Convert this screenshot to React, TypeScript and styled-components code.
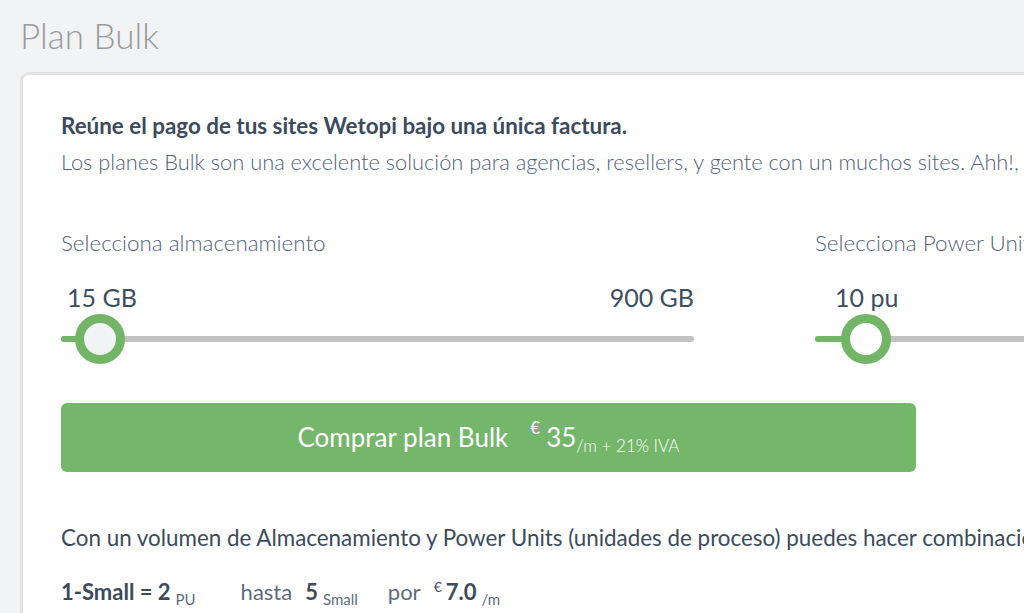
import React from "react";
import styled, { createGlobalStyle } from "styled-components";

const Global = createGlobalStyle`
  html, body { margin: 0; padding: 0; background: #f2f3f5; overflow: hidden; }
  body { font-family: Lato, "Open Sans", sans-serif; width: 1024px; height: 613px; }
`;

const Page = styled.div`
  padding: 14px 0 0 20px;
`;

const Title = styled.h1`
  margin: 0;
  font-weight: 300;
  font-size: 35px;
  line-height: 42px;
  color: #9a9a9a;
`;

const Card = styled.section`
  margin-top: 16px;
  width: 1140px;
  box-sizing: border-box;
  background: #fff;
  border: 3px solid #e3e3e3;
  border-radius: 9px;
  padding: 36px 38px 40px 38px;
`;

const Lead = styled.p`
  margin: 0;
  font-size: 22.4px;
  line-height: 30px;
  font-weight: 700;
  color: #3c4b5c;
  white-space: nowrap;
`;

const Sub = styled.p`
  margin: 6px 0 0;
  font-size: 21.8px;
  line-height: 30px;
  font-weight: 300;
  color: #52627a;
  white-space: nowrap;
`;

const Sliders = styled.div`
  display: grid;
  grid-template-columns: 633px 633px;
  column-gap: 121px;
  margin-top: 52px;
`;

const SliderCol = styled.div`
  display: flex;
  flex-direction: column;
  min-width: 0;
`;

const SliderLabel = styled.div`
  font-size: 22.4px;
  line-height: 28px;
  font-weight: 300;
  color: #52627a;
  white-space: nowrap;
`;

const Values = styled.div<{ $indent?: number }>`
  display: flex;
  justify-content: space-between;
  margin-top: 25px;
  padding-left: ${(p) => p.$indent ?? 0}px;
  font-size: 25px;
  line-height: 30px;
  font-weight: 400;
  color: #3d4e60;
`;

const Track = styled.div`
  position: relative;
  margin-top: 24px;
  height: 6px;
  border-radius: 3px;
  background: #c2c2c2;
`;

const Fill = styled.div`
  position: absolute;
  left: 0;
  top: 0;
  height: 6px;
  border-radius: 3px;
  background: #72b566;
`;

const Thumb = styled.div<{ $bg: string }>`
  position: absolute;
  top: 50%;
  width: 50px;
  height: 50px;
  margin: -25px 0 0 -25px;
  box-sizing: border-box;
  border-radius: 50%;
  border: 9px solid #72b566;
  background: ${(p) => p.$bg};
`;

const BuyButton = styled.button`
  display: block;
  width: 855px;
  height: 69px;
  margin-top: 61px;
  padding: 0;
  border: none;
  border-radius: 6px;
  background: #74b66a;
  color: #fff;
  font-family: Lato, sans-serif;
  text-align: center;
  line-height: 69px;
  white-space: nowrap;
`;

const BtnText = styled.span`
  font-size: 26px;
  font-weight: 400;
  margin-right: 22px;
`;

const Euro = styled.sup<{ $size?: number; $gap?: number; $raise?: number }>`
  font-size: ${(p) => p.$size ?? 17}px;
  vertical-align: ${(p) => p.$raise ?? 0.75}em;
  margin-right: ${(p) => p.$gap ?? 6}px;
  line-height: 0;
`;

const Price = styled.span`
  font-size: 26px;
  font-weight: 400;
`;

const Per = styled.sub`
  font-size: 17px;
  vertical-align: -0.3em;
  line-height: 0;
  font-weight: 300;
`;

const Info = styled.p`
  margin: 51px 0 0;
  font-size: 22.4px;
  line-height: 30px;
  font-weight: 400;
  color: #3c4b5c;
  white-space: nowrap;
`;

const Combo = styled.div`
  display: flex;
  align-items: baseline;
  margin-top: 24px;
  font-size: 22px;
  line-height: 30px;
  color: #3c4b5c;
  white-space: nowrap;
`;

const Group = styled.span<{ $gap?: number }>`
  margin-right: ${(p) => p.$gap ?? 0}px;
`;

const Strong = styled.b`
  font-weight: 700;
`;

const Light = styled.span`
  font-weight: 400;
  color: #5d6c7d;
  margin-right: 13px;
`;

const Unit = styled.sub`
  font-size: 15px;
  vertical-align: -0.3em;
  line-height: 0;
  color: #5d6c7d;
  margin-left: 5px;
`;

type SliderProps = {
  label: string;
  min: string;
  max?: string;
  pos: number;
  bg: string;
  indent?: number;
};

const Slider = ({ label, min, max, pos, bg, indent }: SliderProps) => (
  <SliderCol>
    <SliderLabel>{label}</SliderLabel>
    <Values $indent={indent}>
      <span>{min}</span>
      {max && <span>{max}</span>}
    </Values>
    <Track>
      <Fill style={{ width: pos }} />
      <Thumb $bg={bg} style={{ left: pos }} />
    </Track>
  </SliderCol>
);

export default function App() {
  return (
    <>
      <Global />
      <Page>
        <Title>Plan Bulk</Title>
        <Card>
          <Lead>Reúne el pago de tus sites Wetopi bajo una única factura.</Lead>
          <Sub>
            Los planes Bulk son una excelente solución para agencias, resellers, y gente con un muchos sites. Ahh!, y con un único pago.
          </Sub>
          <Sliders>
            <Slider label="Selecciona almacenamiento" min="15 GB" max="900 GB" pos={39} bg="#f2f3f5" indent={6} />
            <Slider label="Selecciona Power Units" min="10 pu" pos={51} bg="#ffffff" indent={20} />
          </Sliders>
          <BuyButton>
            <BtnText>Comprar plan Bulk</BtnText>
            <Euro>€</Euro>
            <Price>35</Price>
            <Per>/m + 21% IVA</Per>
          </BuyButton>
          <Info>
            Con un volumen de Almacenamiento y Power Units (unidades de proceso) puedes hacer combinaciones de sites.
          </Info>
          <Combo>
            <Group $gap={45}>
              <Strong>1-Small = 2</Strong>
              <Unit>PU</Unit>
            </Group>
            <Group $gap={30}>
              <Light>hasta</Light>
              <Strong>5</Strong>
              <Unit>Small</Unit>
            </Group>
            <Group>
              <Light>por</Light>
              <Euro $size={14} $gap={4} $raise={0.6}>€</Euro>
              <Strong>7.0</Strong>
              <Unit>/m</Unit>
            </Group>
          </Combo>
        </Card>
      </Page>
    </>
  );
}
